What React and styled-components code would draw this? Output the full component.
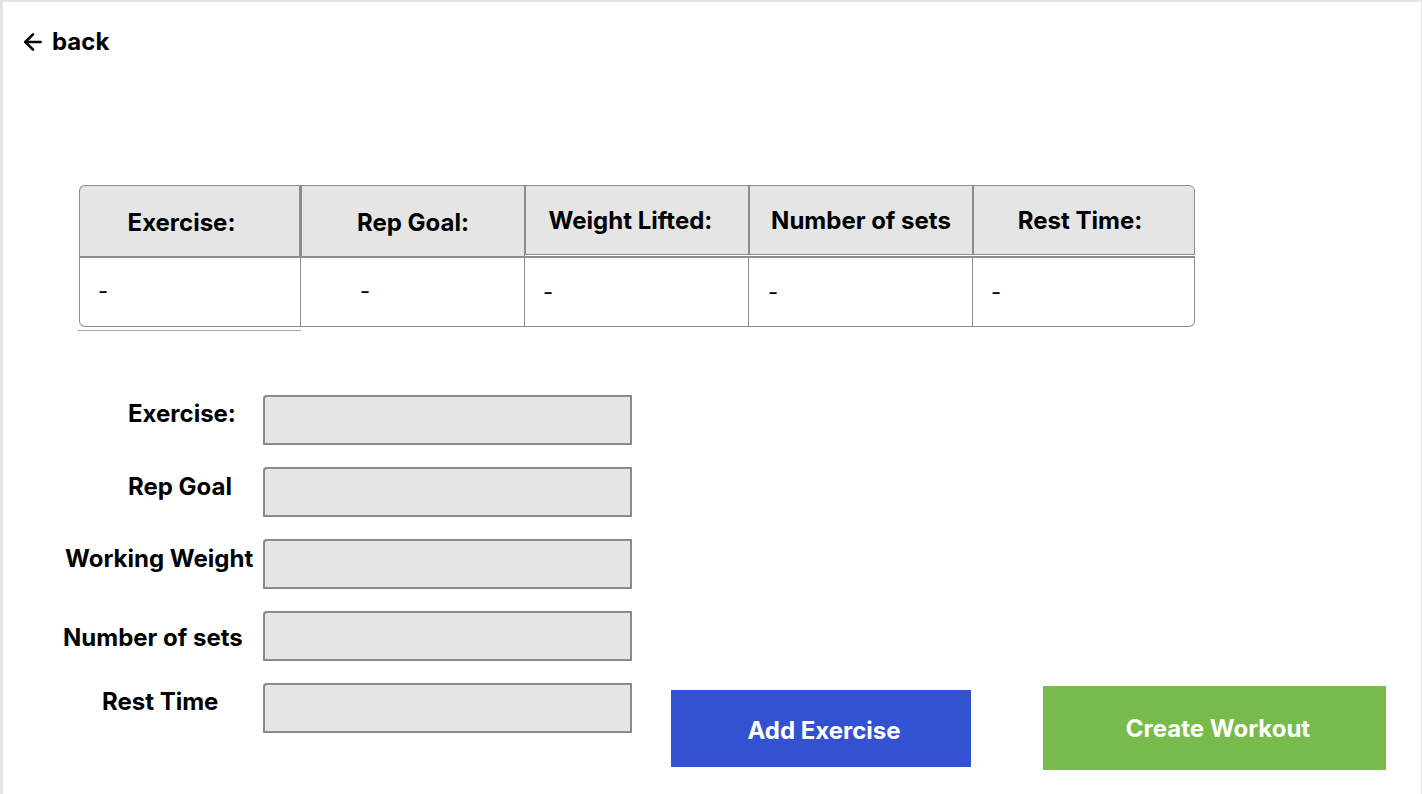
import React from 'react';
import styled, {createGlobalStyle} from 'styled-components';
import {ArrowLeft} from 'lucide-react';

const GlobalStyle = createGlobalStyle`
    body {
        margin: 0;
        background: #e4e4e4;
        font-family: Inter, "Noto Sans", sans-serif;
    }
`;

const columns = [
    {title: 'Exercise:', tall: true, dashPad: 18, width: 222, nudge: 16},
    {title: 'Rep Goal:', tall: true, dashPad: 59, width: 224, nudge: 0},
    {title: 'Weight Lifted:', dashPad: 18, width: 224, nudge: 13},
    {title: 'Number of sets', dashPad: 19, width: 224, nudge: 0},
    {title: 'Rest Time:', dashPad: 18, width: 222, nudge: 8},
];

// indent / shift nudge each label to where it sits in the mockup
const fields = [
    {label: 'Exercise:', indent: 106, shift: -7},
    {label: 'Rep Goal', indent: 106, shift: -6},
    {label: 'Working Weight', indent: 43, shift: -6},
    {label: 'Number of sets', indent: 41, shift: 1},
    {label: 'Rest Time', indent: 80, shift: -7},
];

const App = () => {
    return <>
        <GlobalStyle/>
        <Page>
            <BackLink><ArrowLeft size={26} strokeWidth={2.4}/>back</BackLink>
            <Table>
                {columns.map((col, i) => {
                    const first = i === 0;
                    const last = i === columns.length - 1;
                    return <Column key={col.title} $width={col.width}>
                        <HeaderCell $tall={col.tall} $nudge={col.nudge} $first={first} $last={last}>{col.title}</HeaderCell>
                        <BodyCell $tall={col.tall} $pad={col.dashPad} $first={first} $last={last}>-</BodyCell>
                        {first && <Underline/>}
                    </Column>
                })}
            </Table>
            <Bottom>
                <Form>
                    {fields.map(f => <FieldRow key={f.label}>
                        <Label $indent={f.indent} $shift={f.shift}>{f.label}</Label>
                        <Input type="text"/>
                    </FieldRow>)}
                </Form>
                <AddButton>Add Exercise</AddButton>
                <CreateButton>Create Workout</CreateButton>
            </Bottom>
        </Page>
    </>
}

const Page = styled.div`
    background: #fff;
    margin: 2px 1px 0 3px;
    height: 792px;
    box-sizing: border-box;
    padding: 26px 0 0 22px;
`;

const BackLink = styled.a`
    display: flex;
    width: max-content;
    align-items: center;
    gap: 6px;
    margin-left: -5px;
    font-size: 24px;
    font-weight: 700;
    color: #000;
    cursor: pointer;
    line-height: 28px;
`;

const Table = styled.div`
    display: flex;
    align-items: flex-start;
    margin: 129px 0 0 54px;
`;

const Column = styled.div`
    display: flex;
    flex-direction: column;
    width: ${p => p.$width}px;
`;

const HeaderCell = styled.div`
    height: ${p => p.$tall ? 73 : 70}px;
    margin-bottom: ${p => p.$tall ? 0 : 1}px;
    background: #e5e5e5;
    border: 1px solid #8c8c8c;
    border-bottom-width: ${p => p.$tall ? 2 : 1}px;
    border-right-width: ${p => p.$first ? 2 : 1}px;
    border-top-left-radius: ${p => p.$first ? 6 : 0}px;
    border-top-right-radius: ${p => p.$last ? 6 : 0}px;
    box-sizing: border-box;
    display: flex;
    align-items: center;
    justify-content: center;
    padding-top: ${p => p.$tall ? 2 : 0}px;
    padding-right: ${p => p.$nudge}px;
    font-size: 24px;
    font-weight: 700;
    color: #000;
    white-space: nowrap;
`;

const BodyCell = styled.div`
    height: ${p => p.$tall ? 69 : 71}px;
    border: 1px solid #8c8c8c;
    border-top-width: ${p => p.$tall ? 0 : 2}px;
    border-left-width: ${p => p.$first ? 1 : 0}px;
    border-bottom-left-radius: ${p => p.$first ? 6 : 0}px;
    border-bottom-right-radius: ${p => p.$last ? 6 : 0}px;
    box-sizing: border-box;
    display: flex;
    align-items: center;
    padding-left: ${p => p.$pad}px;
    padding-bottom: ${p => p.$tall ? 2 : 0}px;
    font-size: 22px;
    color: #000;
`;

const Underline = styled.div`
    height: 1px;
    margin: 3px 0 0 -1px;
    background: #a8a8a8;
`;

const Bottom = styled.div`
    display: flex;
    align-items: flex-start;
    margin-top: 64px;
`;

const Form = styled.div`
    display: flex;
    flex-direction: column;
    gap: 22px;
    width: 609px;
`;

const FieldRow = styled.div`
    display: flex;
    align-items: center;
`;

const Label = styled.div`
    width: 241px;
    box-sizing: border-box;
    margin-left: -3px;
    padding-left: ${p => p.$indent}px;
    margin-top: ${p => p.$shift > 0 ? p.$shift * 2 : 0}px;
    margin-bottom: ${p => p.$shift < 0 ? -p.$shift * 2 : 0}px;
    font-size: 24px;
    line-height: 29px;
    font-weight: 700;
    color: #000;
    white-space: nowrap;
`;

const Input = styled.input`
    width: 369px;
    height: 50px;
    box-sizing: border-box;
    background: #e5e5e5;
    border: 2px solid #8a8a8a;
    border-radius: 4px 0 0 0;
    margin: 0;
    padding: 0 10px;
    font-size: 18px;
`;

const AddButton = styled.button`
    margin: 295px 0 0 37px;
    width: 300px;
    height: 77px;
    background: #3352d2;
    border: none;
    color: #fff;
    font-family: Inter, "Noto Sans", sans-serif;
    font-size: 24px;
    font-weight: 700;
    padding: 4px 0 0 6px;
    cursor: pointer;
`;

const CreateButton = styled.button`
    margin: 291px 0 0 72px;
    width: 343px;
    height: 84px;
    background: #76bb4c;
    border: none;
    color: #fff;
    font-family: Inter, "Noto Sans", sans-serif;
    font-size: 24px;
    font-weight: 700;
    padding: 0 0 0 7px;
    cursor: pointer;
`;

export default App;
